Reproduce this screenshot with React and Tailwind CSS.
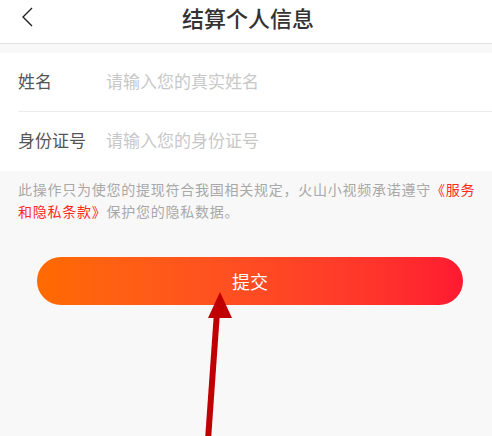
import React from "react";

const font = "font-['Noto_Sans_CJK_SC','Noto_Sans',sans-serif]";

function Field({ label, placeholder, divider }) {
  return (
    <div className="pl-[18px]">
      <div className={`flex items-center h-[59px] pb-[3px] ${divider ? "border-b border-[#ececec]" : ""}`}>
        <span className="w-[88px] text-[17px] text-[#555]">{label}</span>
        <span className="text-[17px] text-[#c8c8c8]">{placeholder}</span>
      </div>
    </div>
  );
}

export default function App() {
  return (
    <div className={`relative w-[492px] h-[436px] overflow-hidden bg-[#f8f8f8] ${font}`}>
      {/* header */}
      <div className="relative flex items-center justify-center h-[44px] bg-white border-b border-[#e2e2e2]">
        <svg className="absolute left-[20px] top-[6px]" width="14" height="22" viewBox="0 0 14 22">
          <path d="M12 2 L3 11 L12 20" fill="none" stroke="#222" strokeWidth="1.4" />
        </svg>
        <h1 className="ml-[4px] text-[22px] font-medium text-[#333] -mt-[8px]">结算个人信息</h1>
      </div>

      {/* form */}
      <div className="mt-[9px] bg-white">
        <Field label="姓名" placeholder="请输入您的真实姓名" divider />
        <Field label="身份证号" placeholder="请输入您的身份证号" />
      </div>

      {/* note */}
      <p className="pl-[18px] pr-[10px] pt-[7px] text-[14px] leading-[22px] tracking-[0.75px] text-[#a8a8a8]">
        此操作只为使您的提现符合我国相关规定，火山小视频承诺遵守
        <span className="text-[#ff2a1a]">《服务和隐私条款》</span>
        保护您的隐私数据。
      </p>

      {/* submit */}
      <div className="pl-[37px] pt-[35px]">
        <button className="w-[426px] h-[48px] rounded-full bg-gradient-to-r from-[#ff6a00] to-[#ff1830] text-white text-[18px]">
          提交
        </button>
      </div>

      {/* annotation arrow */}
      <svg className="absolute left-0 top-0 pointer-events-none" width="492" height="436" viewBox="0 0 492 436">
        <line x1="208" y1="440" x2="217" y2="312" stroke="#c00000" strokeWidth="6" />
        <polygon points="220,292 208,318 232,318" fill="#c00000" />
      </svg>
    </div>
  );
}
